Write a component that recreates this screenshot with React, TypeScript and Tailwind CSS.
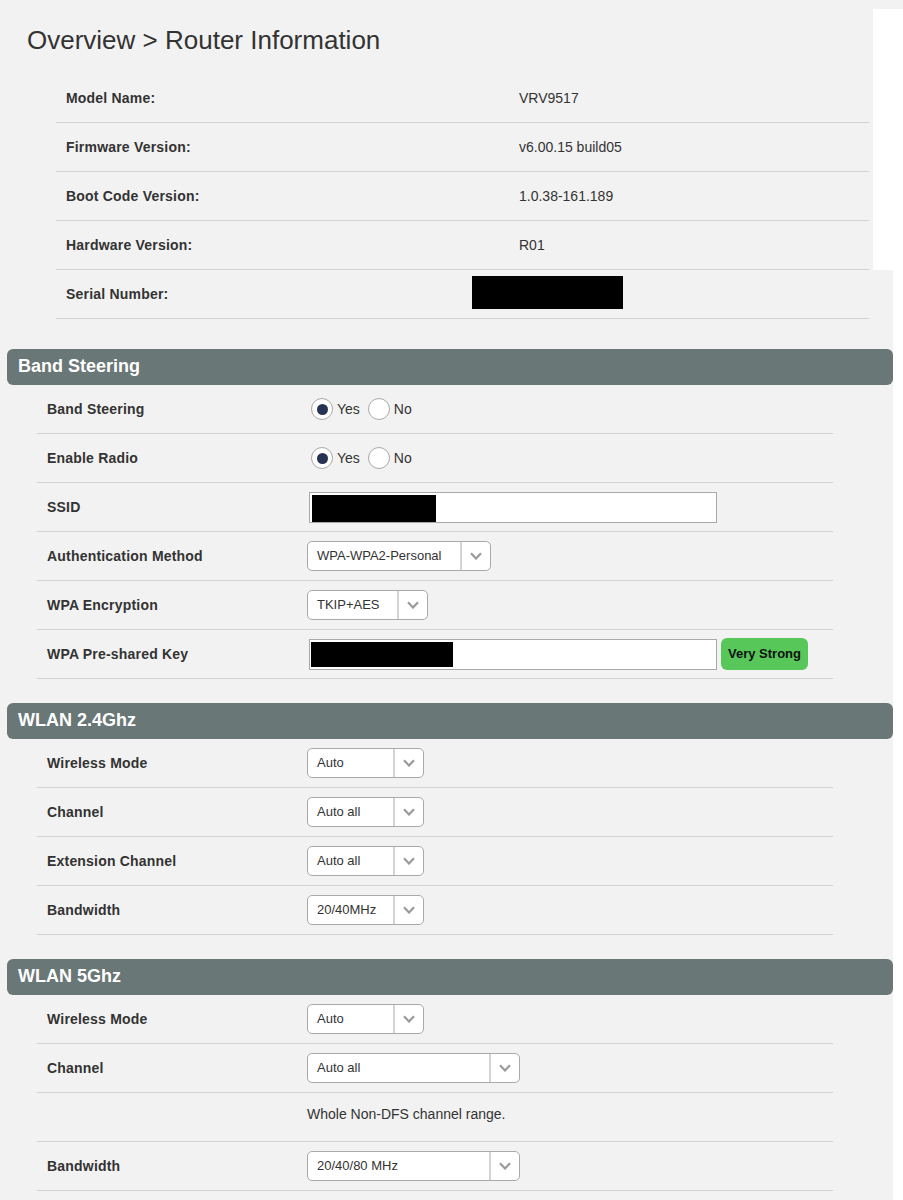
import type { ReactNode } from "react";

const routerInfo = [
  { label: "Model Name:", value: "VRV9517" },
  { label: "Firmware Version:", value: "v6.00.15 build05" },
  { label: "Boot Code Version:", value: "1.0.38-161.189" },
  { label: "Hardware Version:", value: "R01" },
];

function InfoRow({ label, children }: { label: string; children: ReactNode }) {
  return (
    <div className="flex h-[49px] w-[813px] items-center border-b border-[#d2d2d2] ml-[56px]">
      <span className="w-[463px] pl-[10px] text-[14px] font-bold tracking-[0.2px]">{label}</span>
      <span className="text-[14px]">{children}</span>
    </div>
  );
}

function SectionHeader({ title }: { title: string }) {
  return (
    <div className="ml-[7px] flex h-[36px] w-[886px] items-center rounded-[6px] bg-[#6a7777] px-[11px] pb-[2px] text-[18px] font-bold text-white">
      {title}
    </div>
  );
}

function Row({ label, children }: { label?: string; children: ReactNode }) {
  return (
    <div className="ml-[37px] flex h-[49px] w-[796px] items-center border-b border-[#d2d2d2]">
      <span className="w-[270px] shrink-0 pl-[10px] text-[14px] font-bold tracking-[0.2px]">{label}</span>
      {children}
    </div>
  );
}

function Chevron() {
  return (
    <svg width="12" height="8" viewBox="0 0 12 8" fill="none">
      <path d="M1 1.2 L6 6.5 L11 1.2" stroke="#9a9a9a" strokeWidth="2.2" />
    </svg>
  );
}

function Select({ value, width }: { value: string; width: string }) {
  return (
    <div className={`flex h-[30px] ${width} items-stretch rounded-[5px] border border-[#a9a9a9] bg-white`}>
      <span className="flex flex-1 items-center pl-[9px] text-[13px]">{value}</span>
      <span className="flex w-[30px] items-center justify-center border-l-2 border-[#d3d3d3]">
        <Chevron />
      </span>
    </div>
  );
}

function Radio({ checked, label }: { checked?: boolean; label: string }) {
  return (
    <span className="flex items-center">
      <span className="flex h-[22px] w-[22px] items-center justify-center rounded-full border border-[#a9a9a9] bg-white">
        {checked && <span className="h-[11px] w-[11px] rounded-full bg-[#263352]" />}
      </span>
      <span className="ml-[4px] text-[14px]">{label}</span>
    </span>
  );
}

function YesNo() {
  return (
    <div className="ml-[4px] flex items-center gap-[8px]">
      <Radio checked label="Yes" />
      <Radio label="No" />
    </div>
  );
}

function Redacted({ width }: { width: string }) {
  return <div className={`h-full ${width} bg-black`} />;
}

export default function App() {
  return (
    <div className="flex min-h-[1200px] w-[903px] flex-col bg-white font-['Liberation_Sans',Arial,sans-serif] text-[#333]">
      <div className="h-[9px] bg-[#f2f2f2]" />
      <div className="flex">
        <div className="w-[873px] bg-[#f2f2f2]">
          <h1 className="h-[65px] pl-[27px] pt-[16px] text-[26px] leading-[30px]">
            Overview &gt; Router Information
          </h1>
          {routerInfo.map((r) => (
            <InfoRow key={r.label} label={r.label}>
              {r.value}
            </InfoRow>
          ))}
        </div>
        <div className="flex-1 bg-white" />
      </div>

      <div className="w-[893px] flex-1 bg-[#f2f2f2]">
        <div className="ml-[56px] flex h-[49px] w-[813px] items-center border-b border-[#d2d2d2]">
          <span className="w-[416px] pl-[10px] text-[14px] font-bold tracking-[0.2px]">Serial Number:</span>
          <div className="-mt-[4px] h-[33px] w-[151px] bg-black" />
        </div>

        <div className="mt-[30px]">
          <SectionHeader title="Band Steering" />
          <Row label="Band Steering">
            <YesNo />
          </Row>
          <Row label="Enable Radio">
            <YesNo />
          </Row>
          <Row label="SSID">
            <div className="ml-[2px] h-[31px] w-[408px] border border-[#a9a9a9] bg-white p-[2px] pb-0">
              <Redacted width="w-[124px]" />
            </div>
          </Row>
          <Row label="Authentication Method">
            <Select value="WPA-WPA2-Personal" width="w-[184px]" />
          </Row>
          <Row label="WPA Encryption">
            <Select value="TKIP+AES" width="w-[121px]" />
          </Row>
          <Row label="WPA Pre-shared Key">
            <div className="ml-[2px] h-[31px] w-[408px] border border-[#a9a9a9] bg-white px-[1px] py-[2px]">
              <Redacted width="w-[142px]" />
            </div>
            <span className="ml-[4px] flex h-[32px] items-center rounded-[6px] bg-[#57c75a] px-[7px] text-[13px] font-bold text-[#111]">
              Very Strong
            </span>
          </Row>
        </div>

        <div className="mt-[24px]">
          <SectionHeader title="WLAN 2.4Ghz" />
          <Row label="Wireless Mode">
            <Select value="Auto" width="w-[117px]" />
          </Row>
          <Row label="Channel">
            <Select value="Auto all" width="w-[117px]" />
          </Row>
          <Row label="Extension Channel">
            <Select value="Auto all" width="w-[117px]" />
          </Row>
          <Row label="Bandwidth">
            <Select value="20/40MHz" width="w-[117px]" />
          </Row>
        </div>

        <div className="mt-[24px]">
          <SectionHeader title="WLAN 5Ghz" />
          <Row label="Wireless Mode">
            <Select value="Auto" width="w-[117px]" />
          </Row>
          <Row label="Channel">
            <Select value="Auto all" width="w-[213px]" />
          </Row>
          <Row>
            <span className="-mt-[6px] text-[14px]">Whole Non-DFS channel range.</span>
          </Row>
          <Row label="Bandwidth">
            <Select value="20/40/80 MHz" width="w-[213px]" />
          </Row>
        </div>
      </div>
    </div>
  );
}
